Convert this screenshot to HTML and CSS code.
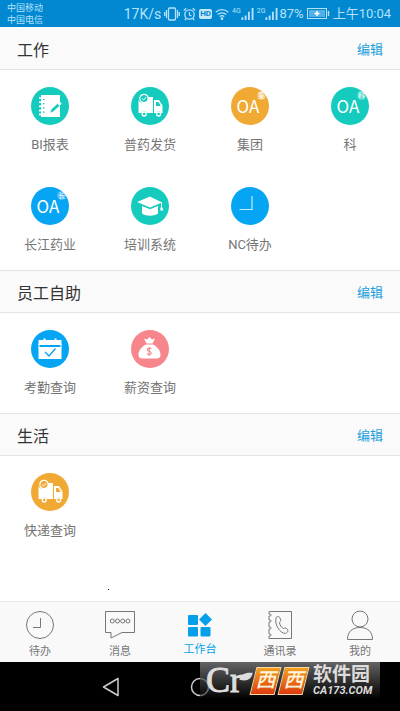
FILE: index.html
```html
<!DOCTYPE html>
<html lang="zh-CN">
<head>
<meta charset="utf-8">
<meta name="viewport" content="width=device-width, initial-scale=1">
<title>工作台</title>
<link rel="stylesheet" href="styles.css">
</head>
<body>
<svg class="defs" aria-hidden="true">
  <symbol id="truck" viewBox="0 0 38 38">
    <path fill="#fff" d="M7.500 13v13h3a3 3 0 0 1 5.500 0h6V10h-6a4.500 4.500 0 0 1-8.500 3zM23 13h5l3.500 5.500V26h-1.200a3 3 0 0 0-5.400 0H23z"/>
    <path fill="currentColor" d="M25 15h2.500l2.300 4H25z"/>
    <circle cx="13" cy="11.500" r="4.200" fill="currentColor" stroke="#fff" stroke-width="1.200"/>
    <path d="M11 11.500l1.700 1.500 2.500-3" fill="none" stroke="#fff"/>
    <circle cx="13.200" cy="27" r="2" fill="none" stroke="#fff" stroke-width="1.300"/>
    <circle cx="27.600" cy="27" r="2" fill="none" stroke="#fff" stroke-width="1.300"/>
  </symbol>
  <symbol id="signal" viewBox="0 0 13 13">
    <path fill="currentColor" d="M0 10h2v3H0zM3.500 8h2v5h-2zM7 4h2v9H7zM11 0h2v13h-2z"/>
  </symbol>
</svg>

<header class="status">
  <div class="carriers"><span>中国移动</span><span>中国电信</span></div>
  <div class="indicators">
    <span class="speed">17K/s</span>
    <svg width="16" height="14" viewBox="0 0 16 14" fill="none" stroke="currentColor" stroke-width="1.300"><rect x="4.500" y="1" width="7" height="12" rx="1"/><path d="M2.500 3v8M.7 5v4M13.500 3v8M15.300 5v4"/></svg>
    <svg width="13" height="14" viewBox="0 0 13 14" fill="none" stroke="currentColor" stroke-width="1.300"><circle cx="6.500" cy="7.500" r="4.700"/><path d="M6.500 5v3l2 1M.8 3.500l2.500-2.300M12.200 3.500L9.700 1.200M3 11.500l-1.200 1.500M10 11.500l1.200 1.500"/></svg>
    <span class="hd">HD</span>
    <svg width="14" height="12" viewBox="0 0 14 12" fill="none" stroke="currentColor" stroke-width="1.300"><path d="M.7 4.200a9 9 0 0 1 12.600 0M2.800 6.500a6 6 0 0 1 8.400 0M4.800 8.700a3.200 3.200 0 0 1 4.400 0"/><circle cx="7" cy="10.700" r=".7" fill="currentColor"/></svg>
    <span class="net"><small>4G</small><svg width="13" height="12"><use href="#signal"/></svg></span>
    <span class="net"><small>2G</small><svg width="13" height="12"><use href="#signal"/></svg></span>
    <span class="percent">87%</span>
    <svg width="23" height="11" viewBox="0 0 23 11"><rect x=".5" y=".5" width="19" height="10" fill="none" stroke="currentColor"/><rect x="2" y="2" width="16" height="7" fill="currentColor" opacity=".45"/><path d="M10 3v5M7.500 5.500h5" stroke="#fff" stroke-width="1.500"/><path d="M21.500 3v5" stroke="currentColor" stroke-width="1.500"/></svg>
    <time>上午10:04</time>
  </div>
</header>

<main>
  <section>
    <div class="bar"><h2>工作</h2><button type="button">编辑</button></div>
    <div class="apps">
      <a href="#"><span class="disc teal"><svg viewBox="0 0 38 38"><path fill="#fff" d="M10 8h19v22H10z"/><path d="M8 11h5M8 15.200h5M8 19.400h5M8 23.600h5M8 27.400h5" stroke="#fff" stroke-width="1.600"/><path d="M12 12.500h1.500M12 16.700h1.500M12 20.900h1.500M12 25.100h1.500" stroke="currentColor" stroke-width="1.200"/><path d="M19 26l1-3.500 6.500-6 2.300 2.300-6.500 6z" fill="currentColor" stroke="#fff" stroke-width=".6"/><path d="M27.500 16l1.300-1.300 2 2-1.300 1.300z" fill="#fff"/></svg></span>BI报表</a>
      <a href="#"><span class="disc teal"><svg><use href="#truck"/></svg></span>普药发货</a>
      <a href="#"><span class="disc amber oa">OA<sup>集</sup></span>集团</a>
      <a href="#"><span class="disc teal oa">OA<sup>科</sup></span>科</a>
      <a href="#"><span class="disc blue oa">OA<sup>长</sup></span>长江药业</a>
      <a href="#"><span class="disc teal"><svg viewBox="0 0 38 38" fill="#fff"><path d="M19 9.500L6 15l13 5.500L31 15.500zM11 19l8 3.300 8-3.300v7.500c-4 3-12 3-16 0z"/><path d="M30.500 15v7" stroke="#fff"/><path d="M29.500 20.500h2l.8 3h-3z"/></svg></span>培训系统</a>
      <a href="#"><span class="disc blue"><svg viewBox="0 0 38 38" fill="none" stroke="#c5ebff" stroke-width="1.200"><path d="M21 9v13.500H8.500"/></svg></span>NC待办</a>
    </div>
  </section>
  <section>
    <div class="bar"><h2>员工自助</h2><button type="button">编辑</button></div>
    <div class="apps">
      <a href="#"><span class="disc blue"><svg viewBox="0 0 38 38"><path fill="#fff" d="M7.500 10h5V8.500h2V10h9V8.500h2V10h5v5h-23zM7.500 17h23v12h-23z"/><path d="M8 14v4M30 14v4" stroke="#fff"/><path d="M14 22l4 4 6.500-7.500" fill="none" stroke="currentColor" stroke-width="1.400"/></svg></span>考勤查询</a>
      <a href="#"><span class="disc pink"><svg viewBox="0 0 38 38"><path fill="#fff" d="M13 8.500l3 1L18.500 7l2.500 2.500 3-1-2.500 5h-6zM15 14.500h7c4 2 7.500 6 7.500 10 0 3-1.500 4-4 4h-14c-2.500 0-4-1-4-4 0-4 3.500-8 7.500-10z"/><path d="M20.300 19c-.7-1.200-4-1.200-4 .7s4 1.200 4 3.200-3.500 2-4.300.5M18.200 17v9" fill="none" stroke="currentColor" stroke-width="1.100"/></svg></span>薪资查询</a>
    </div>
  </section>
  <section>
    <div class="bar"><h2>生活</h2><button type="button">编辑</button></div>
    <div class="apps">
      <a href="#"><span class="disc amber"><svg><use href="#truck"/></svg></span>快递查询</a>
    </div>
  </section>
  <i class="speck"></i>
</main>

<nav class="tabs">
  <a href="#"><svg viewBox="0 0 30 30"><circle cx="15" cy="15" r="13.500"/><path d="M15.500 8v9.500H8"/></svg>待办</a>
  <a href="#"><svg viewBox="0 0 30 30"><path d="M.5 1.500h29v21H17L6 28v-5.500H.5z"/><circle cx="7.300" cy="11" r="2"/><circle cx="12.500" cy="11" r="2"/><circle cx="17.700" cy="11" r="2"/><circle cx="22.900" cy="11" r="2"/></svg>消息</a>
  <a href="#" class="active" aria-current="page"><svg viewBox="0 0 30 30"><rect x="3" y="5" width="10" height="10" rx="1"/><path d="M20.500 3l6.500 6.500-6.500 6.500L14 9.500z"/><rect x="3" y="17" width="10" height="9.500" rx="1"/><rect x="15.500" y="17" width="10" height="9.500" rx="1"/></svg>工作台</a>
  <a href="#"><svg viewBox="0 0 30 30"><path d="M4 4V1.500h22.500v27H4V26M4 4c3 0 3 2 0 2v4c3 0 3 2 0 2v5c3 0 3 2 0 2v5c3 0 3 2 0 2"/><path d="M11 8c1-2 3-2 4 0s1 3-.5 4.500c.5 3 1.500 4.500 4 6 2-1 3-.5 4 1s0 3-2 4c-6-.5-11-9-9.500-15.500z"/></svg>通讯录</a>
  <a href="#"><svg viewBox="0 0 30 30"><circle cx="15" cy="9" r="8"/><path d="M2.500 29.500c0-8 5-12 12.500-12s12.500 4 12.500 12z"/></svg>我的</a>
</nav>

<footer class="system">
  <button type="button" aria-label="返回"><svg width="18" height="20" viewBox="0 0 18 20"><path d="M16 1.500v17L1.500 10z"/></svg></button>
  <button type="button" aria-label="主页"><svg width="20" height="20" viewBox="0 0 20 20"><circle cx="10" cy="10" r="8.500"/></svg></button>
  <button type="button" aria-label="最近"><svg width="18" height="20" viewBox="0 0 18 20"><rect x="1" y="2" width="16" height="16"/></svg></button>
  <div class="mark">
    <span class="cr">Cr<svg width="14" height="10" viewBox="0 0 16 12"><path d="M0 9C2 2 8 0 16 1c-1 8-8 11-16 8z" fill="#ddd"/></svg></span>
    <span class="tile"><b>西</b></span><span class="tile"><b>西</b></span>
    <span class="name"><b>软件园</b><em>CA173.COM</em></span>
  </div>
</footer>
</body>
</html>
```
FILE: styles.css
```css
* { box-sizing: border-box; }

body {
  margin: 0;
  min-height: 100vh;
  display: flex;
  flex-direction: column;
  background: #fff;
  color: #757575;
  font-family: Roboto, "Noto Sans CJK SC", sans-serif;
}

a { color: inherit; text-decoration: none; }
button { padding: 0; border: 0; background: none; font: inherit; color: inherit; }
svg { display: block; }
.defs { position: absolute; width: 0; height: 0; }

/* Status bar */
.status {
  display: flex;
  justify-content: space-between;
  align-items: center;
  height: 27px;
  padding: 0 9px 0 7px;
  background: #0288d1;
  color: #b5e2fa;
}
.carriers { display: flex; flex-direction: column; font-size: 9px; line-height: 12px; }
.indicators { display: flex; align-items: center; gap: 3px; font-size: 13px; line-height: 20px; }
.speed { font-size: 14px; }
.percent { margin-left: -2px; }
.hd {
  padding: 0 1px;
  border-radius: 2px;
  background: #c5e8fb;
  color: #0288d1;
  font-size: 8px;
  font-weight: 700;
  line-height: 10px;
}
.net { display: flex; align-items: center; }
.net small { align-self: flex-start; font-size: 7px; line-height: 7px; }
time { font-size: 13px; }

/* Sections */
main { position: relative; flex: 1; }
.bar {
  display: flex;
  justify-content: space-between;
  align-items: center;
  height: 43px;
  padding: 0 17px;
  border: solid #e4e4e4;
  border-width: 1px 0;
  background: #fafafa;
}
section:first-child .bar { border-top-color: #fafafa; }
h2 { margin: 0; color: #333; font-size: 16px; font-weight: 400; }
.bar button { color: #1a9fdc; font-size: 13px; }

.apps {
  display: grid;
  grid-template-columns: repeat(4, 1fr);
  row-gap: 32px;
  padding: 17px 0 15px;
}
.apps a {
  display: flex;
  flex-direction: column;
  align-items: center;
  gap: 10px;
  font-size: 13px;
  line-height: 20px;
}
.disc { position: relative; width: 38px; height: 38px; border-radius: 50%; }
.disc svg { width: 38px; height: 38px; }
.teal { background: #14cbbd; color: #14cbbd; }
.amber { background: #f0a933; color: #f0a933; }
.blue { background: #06a5f3; color: #06a5f3; }
.pink { background: #f6868b; color: #f6868b; }
.oa {
  padding-right: 4px;
  color: #fff;
  font-family: "Noto Sans CJK SC", sans-serif;
  font-size: 17px;
  line-height: 38px;
  text-align: center;
}
.oa sup {
  position: absolute;
  top: 4px;
  right: 3px;
  width: 9px;
  height: 9px;
  border-radius: 50%;
  background: rgb(255 255 255 / 25%);
  font: 7px/9px "Noto Sans CJK SC", sans-serif;
}
.speck { position: absolute; left: 27%; bottom: 11px; width: 1px; height: 1px; background: #222; }

/* Tabs */
.tabs {
  display: grid;
  grid-template-columns: repeat(5, 1fr);
  height: 61px;
  padding-top: 8px;
  border-top: 1px solid #e4e6e8;
  background: #f9f9fa;
}
.tabs a { display: flex; flex-direction: column; align-items: center; gap: 4px; font-size: 11px; line-height: 16px; }
.tabs svg { width: 30px; height: 30px; fill: none; stroke: #777; stroke-width: 1; }
.tabs .active { gap: 2px; color: #06a0ea; }
.tabs .active svg { fill: #06a0ea; stroke: none; }

/* System navigation */
.system {
  position: relative;
  display: flex;
  justify-content: center;
  align-items: center;
  gap: 70px;
  height: 49px;
  background: #000;
}
.system button svg { fill: none; stroke: #ccc; stroke-width: 1.5; stroke-linejoin: round; }
.system button:nth-child(3) { visibility: hidden; }
.mark {
  position: absolute;
  top: 0;
  right: 20px;
  display: flex;
  align-items: center;
  gap: 3px;
  width: 180px;
  height: 37px;
  padding: 0 6px;
  background: linear-gradient(rgb(110 110 110 / 90%), rgb(0 0 0 / 50%));
  color: #ddd;
}
.cr { position: relative; width: 44px; font: 36px/37px "Liberation Serif", serif; -webkit-text-stroke: 1px #ddd; }
.cr svg { position: absolute; top: 10px; right: -3px; }
.tile { position: relative; z-index: 0; width: 25px; line-height: 26px; text-align: center; }
.tile::before {
  content: "";
  position: absolute;
  inset: 0;
  z-index: -1;
  border: 1px solid #fbd9a8;
  background: linear-gradient(#f5a01c, #dd3d10);
  transform: skewX(-14deg);
}
.tile b { color: #fff4dc; font-size: 20px; font-weight: 500; font-style: italic; }
.name { display: flex; flex-direction: column; margin-left: 4px; }
.name b { font-size: 19px; line-height: 20px; font-weight: 700; }
.name em { font: italic 700 11px/12px Roboto, sans-serif; }
```
